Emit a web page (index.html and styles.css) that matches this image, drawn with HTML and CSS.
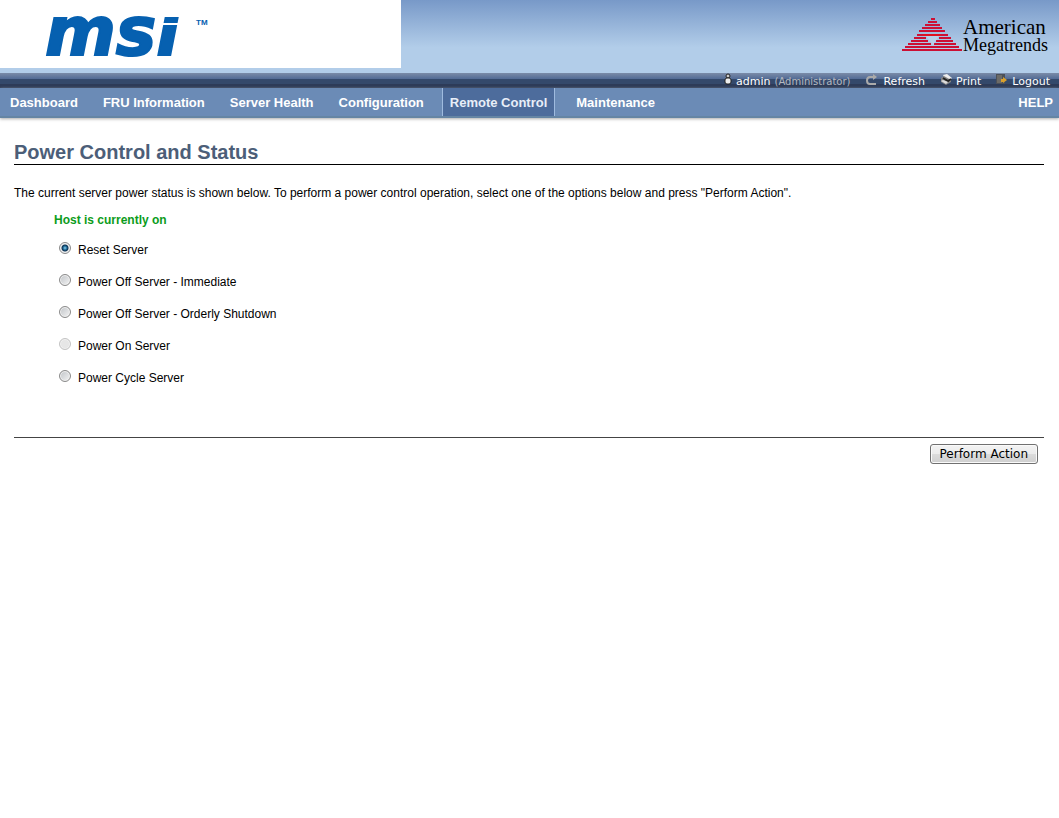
FILE: index.html
```html
<!DOCTYPE html>
<html lang="en">
<head>
<meta charset="UTF-8">
<meta name="viewport" content="width=device-width, initial-scale=1.0">
<title>Power Control and Status</title>
<link rel="stylesheet" href="styles.css">
</head>
<body>
<header class="banner">
    <div class="brand">
        <svg class="msi" width="180" height="50" viewBox="0 0 180 50" role="img" aria-label="MSI">
            <text class="msi-word" x="5" y="45">msi</text>
            <!-- flat top on the i, with the slit below it -->
            <path d="M119 0H156V7H119z" fill="#fff"/>
            <path d="M121 14H156" stroke="#fff" stroke-width="2"/>
            <text class="msi-tm" x="156" y="15">TM</text>
        </svg>
    </div>
    <div class="partner">
        <svg width="60" height="36" viewBox="0 0 60 36" aria-hidden="true">
            <g stroke="#cc1034" stroke-width="2">
                <path d="M29 1h4M26 4h9M23 7h15M20 10h20M17 13h26"/>
                <path d="M15 17h31M12 20h12M37 20h12M9 23h17M34 23h17M6 26h23M32 26h22M3 29h54M0 32h60"/>
            </g>
            <path d="M24 18h13l-6 9z" fill="#b7d0ea"/>
            <path d="M21 17h18" stroke="#e01020" stroke-width="2"/>
        </svg>
        <div class="partner-name"><span>American</span><span class="narrow">Megatrends</span></div>
    </div>
</header>

<div class="toolbar">
    <span class="user">
        <svg width="8" height="12" viewBox="0 0 8 12" aria-hidden="true">
            <circle cx="4" cy="3" r="2" fill="#ccc" stroke="#222"/>
            <rect x="1" y="5" width="6" height="6" rx="2" fill="#eee" stroke="#222"/>
        </svg>
        admin <small>(Administrator)</small>
    </span>
    <a href="#">
        <svg width="14" height="12" viewBox="0 0 14 12" aria-hidden="true">
            <path d="M11 11H5Q2 11 2 7.500T5 4h4" fill="none" stroke="#aaa" stroke-width="2"/>
            <path d="M8 1l4 3-4 3z" fill="#aaa"/>
        </svg>
        Refresh
    </a>
    <a href="#">
        <svg width="12" height="12" viewBox="0 0 12 12" aria-hidden="true">
            <path d="M3 2l4-1 5 4-5 4z" fill="#eee"/>
            <path d="M1 5l3-2 7 4v2l-5 3-5-3z" fill="#888"/>
            <path d="M3 5l5 3 3-2" fill="none" stroke="#222" stroke-width="2"/>
            <path d="M1 8l5 3 2-2-5-2z" fill="#ddd"/>
        </svg>
        Print
    </a>
    <a href="#">
        <svg width="12" height="12" viewBox="0 0 12 12" aria-hidden="true">
            <path d="M0 1h9v10H0z" fill="#4c5159"/>
            <path d="M1 2h5v8H1z" fill="#6c6b68"/>
            <path d="M5 6h2V4l4 3-4 3V9H5z" fill="#d9a02c"/>
        </svg>
        Logout
    </a>
</div>

<nav class="menu">
    <a href="#">Dashboard</a>
    <a href="#">FRU Information</a>
    <a href="#">Server Health</a>
    <a href="#">Configuration</a>
    <a href="#" class="active">Remote Control</a>
    <a href="#">Maintenance</a>
    <a href="#" class="help">HELP</a>
</nav>

<main>
    <h1>Power Control and Status</h1>
    <form>
        <p>The current server power status is shown below. To perform a power control operation, select one of the options below and press "Perform Action".</p>
        <div class="options">
            <strong class="status">Host is currently on</strong>
            <label><input type="radio" name="power" checked>Reset Server</label>
            <label><input type="radio" name="power">Power Off Server - Immediate</label>
            <label><input type="radio" name="power">Power Off Server - Orderly Shutdown</label>
            <label><input type="radio" name="power" disabled>Power On Server</label>
            <label><input type="radio" name="power">Power Cycle Server</label>
        </div>
        <div class="actions">
            <button type="button">Perform Action</button>
        </div>
    </form>
</main>
</body>
</html>
```

FILE: styles.css
```css
body{
    margin:0;
    background:#fff;
    color:#000;
    font:12px/16px "Liberation Sans",Arial,sans-serif;
}
a{color:inherit;text-decoration:none}

/* banner */
.banner{
    display:flex;
    justify-content:space-between;
    align-items:flex-start;
    height:73px;
    background:linear-gradient(#7899c8,#b2cde9 65%,#b2cde9);
}
.brand{box-sizing:border-box;width:401px;height:68px;padding:10px 0 0 40px;background:#fff}
.msi{display:block}
.msi-word{font:italic bold 68px "DejaVu Sans",sans-serif;fill:#0660b0;stroke:#0660b0;stroke-width:2px}
.msi-tm{font:bold 8px "Liberation Sans",sans-serif;fill:#0660b0}
.partner{display:flex;gap:1px;padding:18px 11px 0 0}
.partner-name{display:flex;flex-direction:column;font:21px/18px "Liberation Serif",serif}
.partner-name .narrow{font-size:18px}

/* toolbar */
.toolbar{
    display:flex;
    justify-content:flex-end;
    height:15px;
    padding-right:9px;
    gap:15px;
    background:linear-gradient(#7b8ca8,#526b95 6px,#34496b 6px,#34496b 11px,#2d3b58 11px);
    color:#fff;
    font:11px/17px "DejaVu Sans",Verdana,sans-serif;
}
.toolbar a,.user{display:flex;gap:4px}
.toolbar small{font-size:10px;color:#b4b8bf}

/* menu */
.menu{
    display:flex;
    gap:25px;
    height:28px;
    padding:0 6px 0 10px;
    background:#6b8bb6;
    border-bottom:2px solid #6585a4;
    box-shadow:0 1px 3px #aaa;
    color:#fff;
    font-size:13px;
    font-weight:bold;
    line-height:29px;
}
.menu .active{
    margin:0 -4px 0 -7px;
    padding:0 7px;
    border:solid #9fbbdf;
    border-width:0 1px;
    background:#4d6c9c;
    color:#e8eef8;
}
.menu .help{margin-left:auto}

/* page */
main{padding:22px 15px 0 14px}
h1{
    margin:0;
    border-bottom:1px solid #000;
    color:#4c5e78;
    font-size:20px;
    line-height:24px;
}
p{margin:20px 0 11px}
.options{display:flex;flex-direction:column;gap:16px;padding:0 0 51px 40px}
.status{margin-bottom:-2px;color:#0c9c20}
.options label{display:flex;gap:7px;padding-left:5px}
input[type=radio]{
    appearance:none;
    box-sizing:border-box;
    width:12px;
    height:12px;
    margin:0;
    border:1px solid #8a8a8a;
    border-radius:50%;
    background:linear-gradient(135deg,#bfc3c7,#f4f4f4);
    box-shadow:inset 0 0 0 1px #f2f2f2;
}
input[type=radio]:checked{background:radial-gradient(circle at 5px 5px,#8fd4f2,#14608e 2px,#123250 3px,#dfe5e9 4px)}
input[type=radio]:disabled{border-color:#c4c4c4;background:#e6e6e6}
.actions{display:flex;justify-content:flex-end;padding:6px 6px 0;border-top:1px solid #444}
button{
    height:20px;
    padding:0 9px;
    border:1px solid #707070;
    border-radius:3px;
    background:linear-gradient(#f3f3f3,#ebebeb 50%,#dcdcdc 50%,#cfcfcf);
    box-shadow:inset 0 0 0 1px #fafafa;
    font:12px "DejaVu Sans",sans-serif;
}
```
